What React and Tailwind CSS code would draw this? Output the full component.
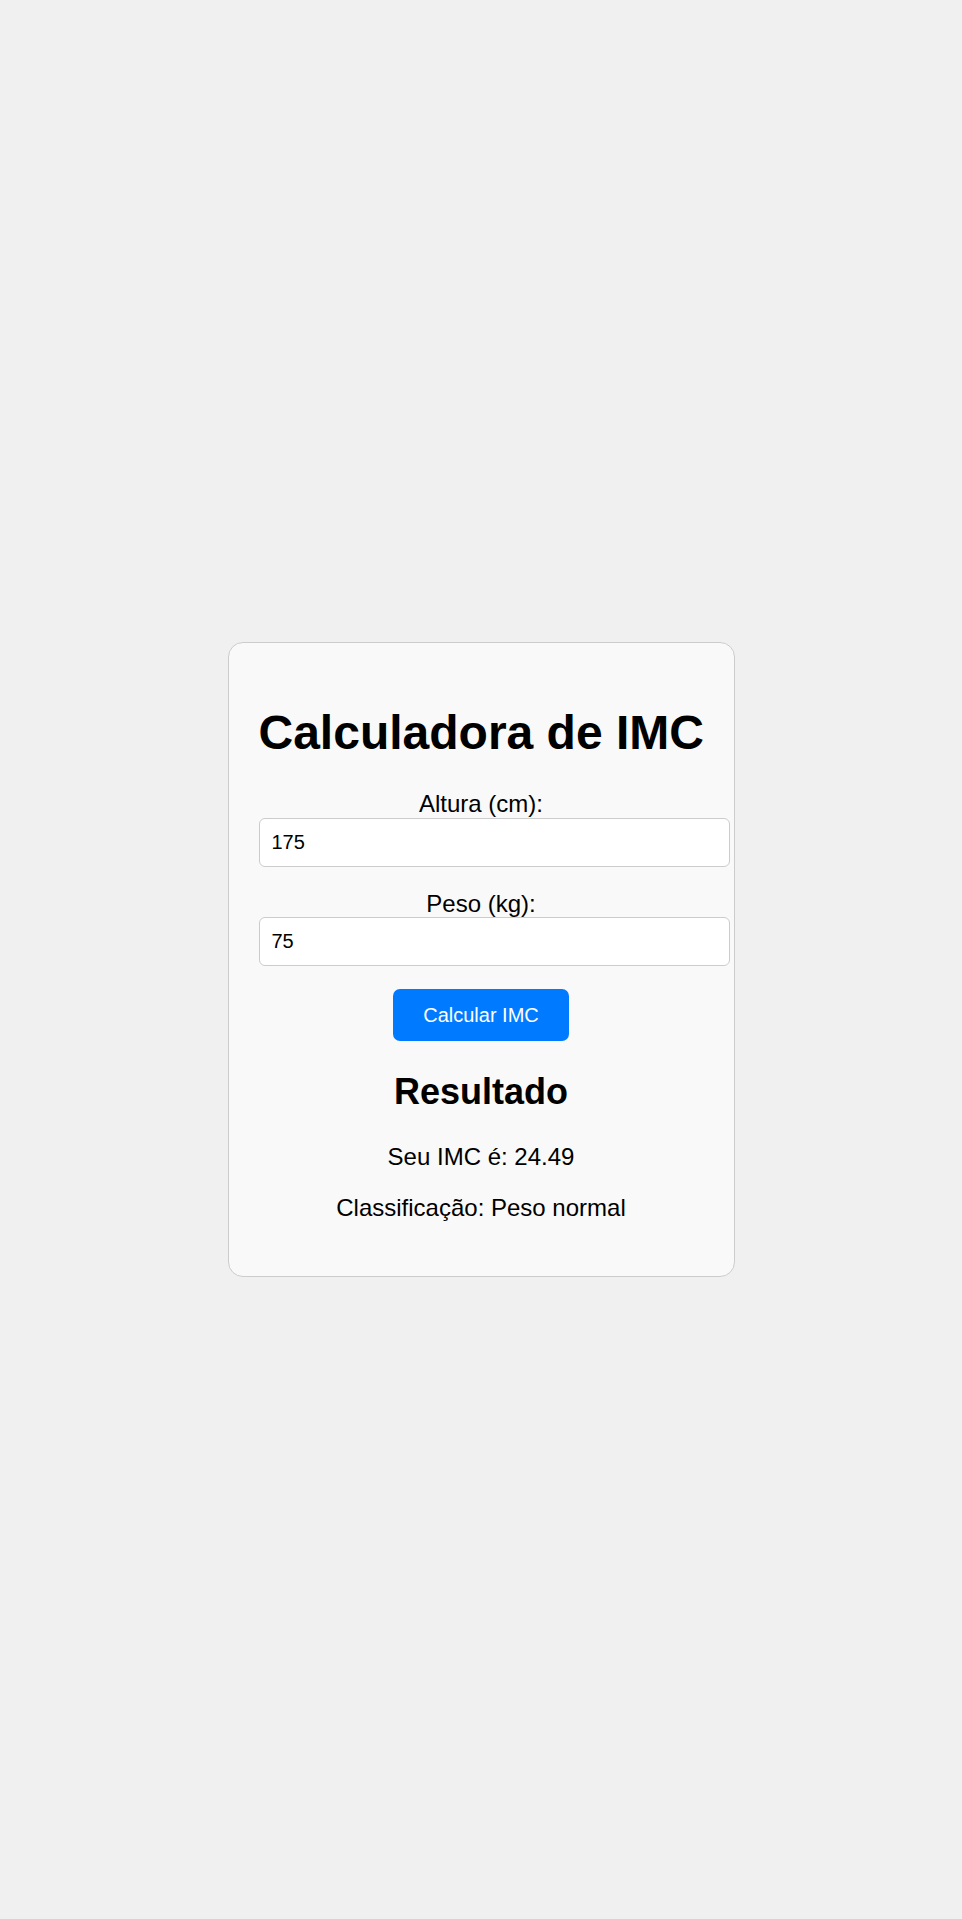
import React, { useState } from "react";

const classify = (imc) => {
  if (imc < 18.5) return "Abaixo do peso";
  if (imc < 25) return "Peso normal";
  if (imc < 30) return "Sobrepeso";
  return "Obesidade";
};

export default function App() {
  const [altura, setAltura] = useState("175");
  const [peso, setPeso] = useState("75");
  const [imc, setImc] = useState(75 / (1.75 * 1.75));

  const calcular = () => {
    const h = parseFloat(altura) / 100;
    const p = parseFloat(peso);
    if (h > 0 && p > 0) setImc(p / (h * h));
  };

  return (
    <div className="min-h-screen w-full flex items-center justify-center bg-[#f0f0f0] font-['Liberation_Sans',Arial,sans-serif] text-black">
      <div className="w-[507px] bg-[#f9f9f9] border border-[#cccccc] rounded-[15px] p-[30px] text-center">
        <h1 className="text-[48px] font-bold leading-[1.15] mt-[32px] mb-[30px] whitespace-nowrap">
          Calculadora de IMC
        </h1>

        {/* --- form --- */}
        <div className="mb-[23px]">
          <label className="block text-[24px] leading-[1.15]">Altura (cm):</label>
          <input
            type="number"
            value={altura}
            onChange={(e) => setAltura(e.target.value)}
            className="block w-[471px] h-[49px] px-[12px] text-[20px] text-left bg-white border border-[#cccccc] rounded-[6px] outline-none"
          />
        </div>
        <div className="mb-[23px]">
          <label className="block text-[24px] leading-[1.15]">Peso (kg):</label>
          <input
            type="number"
            value={peso}
            onChange={(e) => setPeso(e.target.value)}
            className="block w-[471px] h-[49px] px-[12px] text-[20px] text-left bg-white border border-[#cccccc] rounded-[6px] outline-none"
          />
        </div>
        <button
          onClick={calcular}
          className="h-[52px] px-[30px] text-[20px] leading-[1.15] bg-[#007bff] text-white rounded-[7px] cursor-pointer"
        >
          Calcular IMC
        </button>

        {/* --- result --- */}
        <h2 className="text-[36px] font-bold leading-[1.15] mt-[30px] mb-[30px]">
          Resultado
        </h2>
        <p className="text-[24px] leading-[1.15] mb-[24px]">
          Seu IMC é: {imc.toFixed(2)}
        </p>
        <p className="text-[24px] leading-[1.15] mb-[24px]">
          Classificação: {classify(imc)}
        </p>
      </div>
    </div>
  );
}
